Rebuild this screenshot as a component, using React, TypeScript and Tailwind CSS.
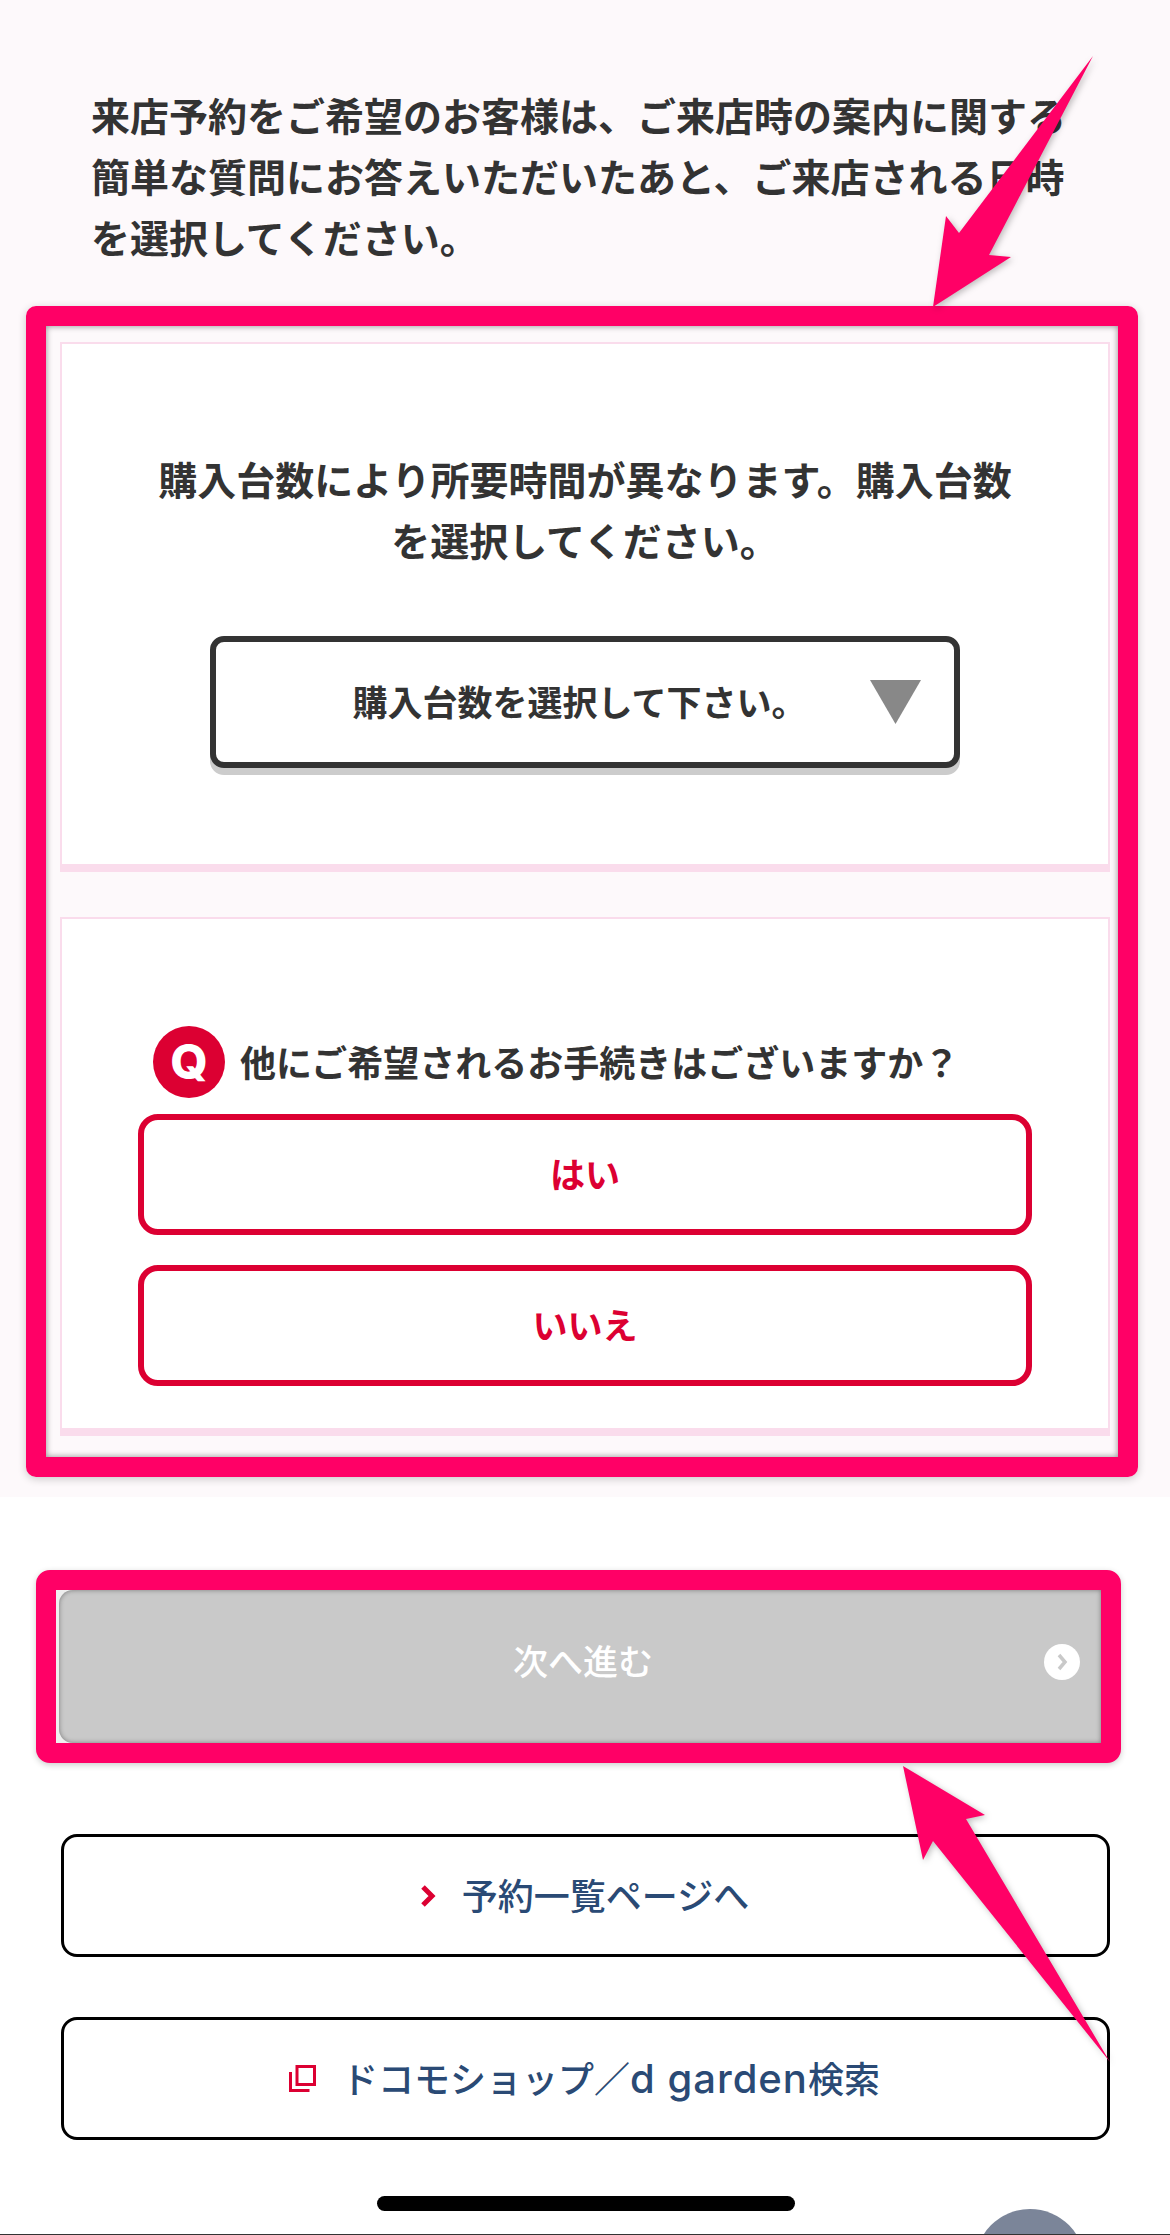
export default function App() {
  const font = { fontFamily: '"Noto Sans CJK JP", "Liberation Sans", sans-serif' };
  return (
    <div style={font} className="relative w-[1170px] h-[2235px] overflow-hidden bg-white text-[#333] font-bold">
      <section className="h-[1497px] bg-[#fdf9fb] pt-[84px]">
        <p className="pl-[91px] text-[39px] leading-[61px]">
          来店予約をご希望のお客様は、ご来店時の案内に関する
          <br />
          簡単な質問にお答えいただいたあと、ご来店される日時
          <br />
          を選択してください。
        </p>
        <div className="mt-[39px] ml-[26px] w-[1112px] h-[1171px] border-[20px] border-[#ff0066] rounded-[10px] shadow-[0_2px_8px_rgba(0,0,0,0.2),inset_0_0_6px_rgba(0,0,0,0.45)] pt-[16px] pl-[14px] pr-[8px]">
          <div className="h-[530px] bg-white border-2 border-b-[8px] border-[#fadcec] pt-[104px] flex flex-col items-center">
            <p className="text-[39px] leading-[61px] text-center">
              購入台数により所要時間が異なります。購入台数
              <br />
              を選択してください。
            </p>
            <div className="mt-[66px] w-[750px] h-[132px] bg-white border-[6px] border-[#333] rounded-[14px] shadow-[0_7px_0_#cccccc] flex items-center">
              <span className="flex-1 pl-[73px] pb-[2px] text-center text-[35px] leading-[48px]">購入台数を選択して下さい。</span>
              <svg width="51" height="44" viewBox="0 0 51 44" className="mr-[33px]">
                <polygon points="0,0 51,0 25.5,44" fill="#888888" />
              </svg>
            </div>
          </div>
          <div className="mt-[45px] h-[519px] bg-white border-2 border-b-[8px] border-[#fadcec] pt-[107px] pl-[76px]">
            <div className="flex items-center pl-[15px] gap-[15px] w-[894px]">
              <span style={{ fontFamily: 'Inter, "Liberation Sans", sans-serif' }} className="w-[72px] h-[72px] rounded-full bg-[#dc0032] text-white text-[48px] leading-none font-extrabold flex items-center justify-center">Q</span>
              <span className="text-[36px] leading-[50px] pb-[3px]">他にご希望されるお手続きはございますか？</span>
            </div>
            <div className="mt-[16px] w-[894px] flex flex-col gap-[30px]">
              <div className="h-[121px] pb-[3px] border-[6px] border-[#dc0032] rounded-[20px] flex items-center justify-center text-[#dc0032] text-[35px] font-bold">はい</div>
              <div className="h-[121px] pb-[3px] border-[6px] border-[#dc0032] rounded-[20px] flex items-center justify-center text-[#dc0032] text-[35px] font-bold">いいえ</div>
            </div>
          </div>
        </div>
      </section>

      <div className="mt-[73px] ml-[36px] w-[1085px] h-[193px] border-[20px] border-[#ff0066] rounded-[14px] shadow-[0_2px_6px_rgba(0,0,0,0.2)] bg-[#efefef]">
        <div className="relative h-full ml-[3px] rounded-l-[14px] bg-[#c9c9c9] shadow-[inset_0_0_5px_rgba(0,0,0,0.4)] flex items-center justify-center pb-[12px] text-white text-[35px] font-medium">
          <span className="ml-[6px]">次へ進む</span>
          <span className="absolute left-[985px] top-[54px] w-[36px] h-[36px] rounded-full bg-white flex items-center justify-center">
            <svg width="14" height="20" viewBox="0 0 14 20" fill="none">
              <path d="M4 3l6 7-6 7" stroke="#c9c9c9" strokeWidth="3.5" />
            </svg>
          </span>
        </div>
      </div>

      <div className="mt-[71px] ml-[61px] w-[1049px] flex flex-col gap-[60px] text-[#2a4a75] text-[36px] font-medium">
        <div className="h-[123px] border-[3px] border-black rounded-[16px] bg-white flex items-center justify-center gap-[26px] pr-[2px]">
          <svg width="16" height="22" viewBox="0 0 16 22" fill="none">
            <path d="M3 2l9 9-9 9" stroke="#dc0032" strokeWidth="5" />
          </svg>
          <span className="pb-[3px]">予約一覧ページへ</span>
        </div>
        <div className="h-[123px] border-[3px] border-black rounded-[16px] bg-white flex items-center justify-center gap-[26px] pr-[2px]">
          <svg width="27" height="27" viewBox="0 0 27 27" fill="none">
            <path d="M8 1.500h17.500v18H8zM1.500 7v18.500h19" stroke="#dc0032" strokeWidth="3" />
          </svg>
          <span>
            ドコモショップ／
            <span style={{ fontFamily: 'Inter, "Liberation Sans", sans-serif' }} className="text-[40px] font-medium tracking-[1px]">d garden</span>
            検索
          </span>
        </div>
      </div>

      <div className="mt-[56px] ml-[377px] w-[418px] h-[15px] rounded-full bg-black" />

      {/* annotation arrows lying over the page */}
      <svg width="1170" height="2235" viewBox="0 0 1170 2235" className="absolute left-0 top-0 pointer-events-none drop-shadow-[2px_2px_3px_rgba(0,0,0,0.25)]">
        <polygon points="1093,56 989,255 1011,257 933,307 946,216 959,233" fill="#ff0066" />
        <polygon points="903,1766 985,1815 966,1819 1110,2062 933,1841 923,1860" fill="#ff0066" />
      </svg>

      <div className="absolute left-[975px] top-[2209px] w-[110px] h-[110px] rounded-full bg-[#7b8599]" />
      <div className="absolute left-0 bottom-0 w-full h-[1px] bg-[#333]" />
    </div>
  );
}
